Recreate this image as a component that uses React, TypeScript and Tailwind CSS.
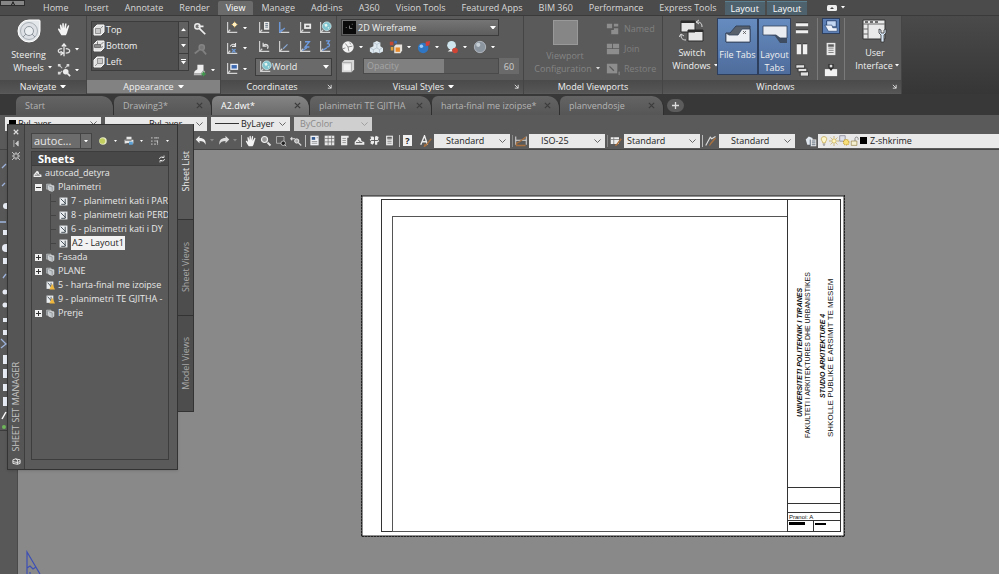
import { useState, type ReactNode } from 'react'
import { clsx } from 'clsx'

const MENU = [
    'Home', 'Insert', 'Annotate', 'Render', 'View', 'Manage', 'Add-ins', 'A360',
    'Vision Tools', 'Featured Apps', 'BIM 360', 'Performance', 'Express Tools',
]

const FILE_TABS = [
    { name: 'Start', width: 'w-[98px]', closable: false },
    { name: 'Drawing3*', width: 'w-[98px]', closable: true },
    { name: 'A2.dwt*', width: 'w-[98px]', closable: true },
    { name: 'planimetri TE GJITHA', width: 'w-[122px]', closable: true },
    { name: 'harta-final me izoipse*', width: 'w-[128px]', closable: true },
    { name: 'planvendosje', width: 'w-[104px]', closable: true },
]

const VIEWS = ['Top', 'Bottom', 'Left']

type SheetRow = { name: string; kind: 'root' | 'open' | 'closed' | 'sheet' | 'warn'; nested?: boolean }

const SHEETS: SheetRow[] = [
    { name: 'autocad_detyra', kind: 'root' },
    { name: 'Planimetri', kind: 'open' },
    { name: '7 - planimetri kati i PAR', kind: 'sheet', nested: true },
    { name: '8 - planimetri kati PERD', kind: 'sheet', nested: true },
    { name: '6 - planimetri kati i DY', kind: 'sheet', nested: true },
    { name: 'A2 - Layout1', kind: 'sheet', nested: true },
    { name: 'Fasada', kind: 'closed' },
    { name: 'PLANE', kind: 'closed' },
    { name: '5 - harta-final me izoipse', kind: 'warn' },
    { name: '9 - planimetri TE GJITHA -', kind: 'warn' },
    { name: 'Prerje', kind: 'closed' },
]

/* ---------- icons ---------- */

const axes = <path d="M3 1v12h11M3 13l3-3" fill="none" stroke="#d4d4d4" strokeWidth="1.3" />
const globe = (
    <>
        <circle cx="10" cy="6" r="5" fill="#7fc4cf" stroke="#d9f1f4" strokeWidth=".8" />
        <path d="M7 4l3-1 1 2-2 2zM11 7l2 0-1 2z" fill="#e6f5ef" />
    </>
)
const lens = <path d="M10 10l4 4" stroke="#e8e8e8" strokeWidth="2.4" />

const ICONS: Record<string, ReactNode> = {
    hand: (
        <path
            d="M5 15C3 12 1.500 9.500 1 8c.6-.9 1.800-.5 3 1.200L3.200 3.500c.2-1 1.500-1 1.700 0L6 7V2c.2-1.200 1.600-1.200 1.800 0L8 7l1.300-5c.4-1 1.700-.7 1.600.4L10.200 8l2.300-4c.6-.8 1.700-.2 1.400.7L12 10.500c-.5 2-1 3.500-2 4.500z"
            fill="#f4f4f4"
        />
    ),
    orbit: (
        <>
            <path d="M6 6.500C0 7 0 11 6 11.500M10 6.500c6 .5 6 4.500 0 5" fill="none" stroke="#e0e0e0" strokeWidth="1.500" />
            <path d="M8 1v14M5.500 4L8 1l2.500 3M4 9.500l3 2-3 2.500" fill="none" stroke="#eee" strokeWidth="1.400" />
        </>
    ),
    extents: (
        <>
            <path d="M3 3l3 3M3 12l3-3M12 3L9 6" fill="none" stroke="#c9c9c9" strokeWidth="1.200" />
            <path d="M1 1h3v3H1zM11 1h3v3h-3zM1 10h3v3H1z" fill="#d8d8d8" />
            <circle cx="10" cy="10" r="3.200" fill="#ececec" />
            <path d="M12 12l3 3" stroke="#eee" strokeWidth="2" />
        </>
    ),
    zoomOn: (
        <>
            <circle cx="5" cy="5" r="3" fill="#777" stroke="#eee" strokeWidth="1.600" />
            <path d="M7.500 7.500L14 14M6 5h6" stroke="#eee" strokeWidth="2" />
        </>
    ),
    zoomOff: (
        <>
            <circle cx="10" cy="5" r="3" fill="#777" stroke="#858585" strokeWidth="1.600" />
            <path d="M7.500 7.500L2 12M10 7l5 6" stroke="#808080" strokeWidth="2" />
        </>
    ),
    camera: (
        <>
            <path d="M2 9l3-2V2h7v6l-3 4H1z" fill="#eee" />
            <path d="M1 12h8l3-4 2 2-4 4H1z" fill="#b8b8b8" />
            <path d="M12 10v5M9.500 12.500h5" stroke="#3f9a4c" strokeWidth="1.600" />
        </>
    ),
    ucsStar: <>{axes}<path d="M11 0l1 3 3 1-3 1-1 3-1-3-3-1 3-1z" fill="#f3b84b" /><circle cx="11" cy="4" r="2.300" fill="#fff1c4" /></>,
    ucsRotate: <>{axes}<path d="M6 5c2-3 4-3 6-1M12 1v4H8" fill="none" stroke="#e6e6e6" strokeWidth="1.300" /><path d="M8 8l4 4M12 8l-4 4" stroke="#6e9bd8" strokeWidth="1.400" /></>,
    ucsView: <>{axes}<path d="M6 2h9v7H6z" fill="#e9eef7" /><path d="M7.500 3.500h6v4h-6z" fill="#3c69b0" /></>,
    ucsDoc: <>{axes}<path d="M8 1h6v9H8z" fill="#e8e8e8" /><path d="M9.500 3h3M9.500 5h3M9.500 7h3" stroke="#567" /></>,
    ucsOrigin: <>{axes}<path d="M3 1v12M3 13l6-5" stroke="#6b96d6" strokeWidth="1.500" /></>,
    ucsFace: <>{axes}<path d="M7 3h8v6H7z" fill="#eee" /><path d="M9 5h4v2H9z" fill="#666" /></>,
    ucsWorld: <>{axes}{globe}</>,
    ucsPrev: <>{axes}<path d="M7 3v4h4M7 7c3-4 7-1 5 3" fill="none" stroke="#e2e2e2" strokeWidth="1.300" /></>,
    ucsObj: <>{axes}<path d="M7 10l5-5" stroke="#8aa9d6" strokeWidth="1.300" /></>,
    ucsZ: <>{axes}<path d="M8 2h5L8 8h5M5 12l5-3" fill="none" stroke="#6f9be0" strokeWidth="1.500" /></>,
    ucs3: <>{axes}<path d="M9 1h4l-2 3c3 0 3 4-1 4M5 12l5-3" fill="none" stroke="#6f9be0" strokeWidth="1.500" /></>,
    shutter: (
        <>
            <circle cx="8" cy="8" r="6.500" fill="#f2f2f2" />
            <path d="M8 8L5 4M8 8l5-1M8 8l1 5M5 9l-3 1M10 3l1 2" stroke="#666" strokeWidth=".8" />
        </>
    ),
    cubes: (
        <>
            <path d="M5 3l4-2 4 2v4l3 2v4l-4 2-4-1-4 1-3-2V9l4-2z" fill="#dfe9f0" />
            <path d="M5 3l4 2 4-2M9 5v4M1 9l4 2 4-2 3 2 3-2M5 11v4M12 11v4" fill="none" stroke="#a3b4c0" strokeWidth=".7" />
        </>
    ),
    swatches: (
        <>
            <path d="M1 2h4v4H1z" fill="#c54a36" /><path d="M6 1h3v3H6z" fill="#3c6db8" />
            <path d="M2 8h3v4H2z" fill="#e0a13a" />
            <path d="M6 7l2-2h7v7l-2 3H6z" fill="#e7e2db" /><path d="M7.500 8.500h5v5h-5z" fill="#e88a2a" />
        </>
    ),
    blueBall: <><circle cx="7" cy="9" r="6" fill="#2f76c4" /><circle cx="5" cy="7" r="2" fill="#9cccf5" /><path d="M10 2l5-1-1 5-4 1z" fill="#d2403b" /></>,
    redBall: <><circle cx="7.500" cy="6" r="5" fill="#cfe6ee" /><path d="M3 13h6l-2-3" fill="#eee" /><circle cx="11.500" cy="12" r="3.200" fill="#cf4434" /></>,
    greyBall: <><circle cx="8" cy="8" r="6.500" fill="#8b95a0" stroke="#c5ccd2" strokeWidth=".8" /><circle cx="6" cy="5.500" r="2.400" fill="#c8d0d7" /></>,
    opacityCube: <><path d="M1 4l3-3h11v11l-3 3H1z" fill="#d7d7d7" /><path d="M3 6h8v7H3z" fill="#f3f3f3" /><path d="M12 4v11M1 4h11" stroke="#999" strokeWidth=".7" /></>,
    vpNamed: <path d="M1 2h6v5H1zM9 2h5v3H9zM9 7h5v7H6V9h3z" fill="#8d8d8d" />,
    vpJoin: <path d="M1 2h6v5H1zM8 2h7v5H8zM1 8h14v6H1z" fill="#8d8d8d" />,
    vpRestore: <><path d="M1 2h12v11H1z" fill="#8d8d8d" /><path d="M4 5l5 5M14 10v5" stroke="#5a5a5a" strokeWidth="1.500" /><path d="M15 11v4" stroke="#999" /></>,
    tileH: <><path d="M1 2h14v4H1zM1 10h14v4H1z" fill="#f0f0f0" /><path d="M1 2h14M1 10h14" stroke="#222" /></>,
    tileV: <><path d="M2 2h5v12H2zM9 2h5v12H9z" fill="#f0f0f0" /><path d="M2 2h5M9 2h5" stroke="#222" /></>,
    cascade: <path d="M1 2h10v4H1zM3.500 6h10v4h-10zM6 10h9.500v5H6z" fill="#e3e3e3" stroke="#333" />,
    statusBar: <><path d="M3 2h11v7H3z" fill="#c4d7f2" stroke="#203a68" /><path d="M1 7h8l1 3h5v4H5z" fill="#eef3fb" stroke="#203a68" strokeWidth=".7" /></>,
    calc: <><path d="M3 1h10v14H3z" fill="#e8e8e8" /><path d="M5 3h6v2H5zM5 7h6M5 9.500h6M5 12h6" fill="#555" stroke="#777" /></>,
    clip: <><path d="M1 7h14v8H1z" fill="#f3f3f3" /><path d="M5 1h6v4l-3 4-3-4z" fill="#2d2d2d" /><path d="M6.500 2h3v3h-3z" fill="#ddd" /></>,
    bulbYellow: <><circle cx="8" cy="8" r="6" fill="#e6e9c4" /><circle cx="7" cy="8" r="4.500" fill="#c2cf5e" /></>,
    printer: <><path d="M4 1h8v4H4zM1 6h14v6H1z" fill="#e6e6e6" /><path d="M8 9h6v5H8z" fill="#5ba1d6" /><path d="M2 7h10M4 12h4" stroke="#444" /></>,
    numbering: <path d="M3 2v3M3 7v3M3 12v3M7 3h7M7 8h4M12 7v7M7 13h3" stroke="#dcdcdc" strokeWidth="1.700" strokeDasharray="2 1" fill="none" />,
    refresh: <path d="M3 8c0-4 5-5 8-3M13 8c0 4-5 5-8 3M12 1v4H8M4 15v-4h4" fill="none" stroke="#f0f0f0" strokeWidth="1.700" />,
    undo: <path d="M1 6l5-5v3c6 0 9 3 8 9-1-4-4-5-8-5v3z" fill="#eee" />,
    redo: <path d="M15 6l-5-5v3C4 4 1 7 2 13c1-4 4-5 8-5v3z" fill="#dcdcdc" />,
    zoomLens: <><circle cx="6" cy="6" r="4" fill="#999" stroke="#eee" strokeWidth="1.600" />{lens}</>,
    zoomWindow: <><path d="M2 2h10v9H2z" fill="none" stroke="#c4c4c4" /><circle cx="11" cy="11" r="3" fill="#222" stroke="#ddd" /><path d="M13 13l2 2" stroke="#eee" /></>,
    zoomPrev: <><circle cx="9" cy="8" r="2.800" fill="#aaa" stroke="#eee" strokeWidth="1.300" /><path d="M1 5h6M3 3L1 5l2 2M11 10l4 4" stroke="#ddd" strokeWidth="1.500" /></>,
    propsDoc: <><path d="M2 1h12v14H2z" fill="#eef0f4" /><path d="M4 3h5v4H4z" fill="#31588f" /><path d="M11 4h2M4 9.500h8M4 12h8" stroke="#777" /></>,
    gridDoc: <><path d="M1 1h14v14H1z" fill="#e6e6e6" /><path d="M1 5h14M1 10h14M6 1v14M11 1v14" stroke="#666" /></>,
    toolDoc: <><path d="M3 1h11v3h-2v11H3z" fill="#e9e9e9" /><path d="M5 5h5M5 8h5M5 11h5" stroke="#777" /></>,
    sheets: <><path d="M1 10l6-7 3 2 1 4 4 1v4H1z" fill="#eee" /><path d="M3 11h9M6 7l4 4" stroke="#555" strokeWidth="1.300" /></>,
    markup: <><path d="M2 2h4l2 2 2-3 4 2-1 4 2 2-3 2v3H9l-1-3-3 3-3-2 1-3-2-2 2-2z" fill="#ebebeb" /><path d="M3 8h10M8 3v10" stroke="#555" strokeWidth="1.300" /></>,
    textStyle: <><path d="M1 13L6 1l4 12M3 9h6" fill="none" stroke="#eee" strokeWidth="1.800" /><path d="M15 5L8 14l-2 1 1-3" fill="none" stroke="#a9703f" strokeWidth="1.700" /></>,
    dimStyle: <><path d="M1 2v11M15 2v11M1 7h14" stroke="#ddd" strokeWidth="1.300" /><path d="M14 3L6 9l-4 2v3h12" fill="none" stroke="#a9703f" strokeWidth="1.800" /></>,
    tableStyle: <><path d="M1 3h11v9H1z" fill="#eee" /><path d="M1 6h11M5 3v9" stroke="#777" /><path d="M15 5l-6 8-2 1" fill="none" stroke="#a9703f" strokeWidth="2" /></>,
    leaderStyle: <><path d="M1 14L7 3l2 2 5-3" fill="none" stroke="#ddd" strokeWidth="1.500" /><path d="M14 4L8 11l-2 3" fill="none" stroke="#a9703f" strokeWidth="1.800" /></>,
    layers: <><path d="M1 6l4-4 5 2v9H3z" fill="#dfe6ee" /><path d="M7 6h8v9H7z" fill="#f2f2f2" /><path d="M7 6v9M9 8h5M9 10.500h5M9 13h5" stroke="#345" /></>,
    bulb: <><path d="M8 1c5 0 5 5 3 7l-1 3H6L5 8C3 6 3 1 8 1z" fill="#fdf6c8" stroke="#b8962e" /><path d="M6 13h4M7 15h2" stroke="#555" /></>,
    sun: <><circle cx="8" cy="8" r="3.500" fill="#fff6c0" stroke="#b8962e" /><path d="M8 0v3M8 13v3M0 8h3M13 8h3M2.500 2.500l2 2M11.500 11.500l2 2M13.500 2.500l-2 2M4.500 11.500l-2 2" stroke="#b8962e" /></>,
    vpFreeze: <><path d="M1 1h8v8H1z" fill="#dfe1ea" stroke="#778" /><circle cx="10.500" cy="10.500" r="4" fill="#f7df7a" stroke="#c19a2b" strokeDasharray="1.500 1" strokeWidth="1.500" /></>,
    lock: <><path d="M2 8h9v7H2z" fill="#f3eed0" stroke="#8d7a3a" /><path d="M8 8V4c0-3 5-3 5 0v2" fill="none" stroke="#777" strokeWidth="1.300" /></>,
    sheetSet: <><path d="M1 2h8v9H1z" fill="#8e9498" stroke="#c9cdd0" /><path d="M4 5l3-1 7 1v8l-3 2-6-2z" fill="#c3cacf" stroke="#eee" /><path d="M5 5l6 2v8" fill="none" stroke="#777" /></>,
    sheet: <><path d="M1 1h14v14H1z" fill="#e9ecee" /><path d="M3 3l9 9M11 3v10H4" stroke="#3a444c" strokeWidth="1.600" fill="none" /></>,
    sheetWarn: <><path d="M1 1h12v13H1z" fill="#e9ecee" /><path d="M3 3l7 8M9 3v8" stroke="#3a444c" strokeWidth="1.500" fill="none" /><path d="M11 5l5 10H6z" fill="#eeb63c" /></>,
}

function Icon({ name, size = 'size-[14px]' }: { name: string; size?: string }) {
    return (
        <svg viewBox="0 0 16 16" className={clsx('shrink-0', size)} aria-hidden="true">
            {ICONS[name]}
        </svg>
    )
}

function Caret({ className = 'w-[5px] text-white' }: { className?: string }) {
    return (
        <svg viewBox="0 0 8 5" className={clsx('shrink-0', className)} aria-hidden="true">
            <path d="M0 0h8L4 5z" fill="currentColor" />
        </svg>
    )
}

/* ---------- small controls ---------- */

function Tool({ icon, drop = false, label }: { icon: string; drop?: boolean; label: string }) {
    return (
        <button type="button" aria-label={label} className="flex items-center gap-1">
            <Icon name={icon} />
            {drop && <Caret className="w-1 text-white" />}
        </button>
    )
}

function LightSelect({ label, options, width, inset = 'pl-3', muted = false, line = false }: {
    label: string
    options: string[]
    width: string
    inset?: string
    muted?: boolean
    line?: boolean
}) {
    return (
        <label className={clsx('relative flex h-[14px] shrink-0 items-center', width, muted ? 'bg-[#cfcfcf] text-[#8a8a8a]' : 'bg-[#e9e9e9] text-[#222]')}>
            {line && <span className="ml-1 h-px w-6 shrink-0 bg-[#333]" />}
            <select aria-label={label} disabled={muted} className={clsx('h-full w-full appearance-none leading-[14px] opacity-100 outline-none', inset)}>
                {options.map((o) => <option key={o}>{o}</option>)}
            </select>
            <svg viewBox="0 0 8 5" className="pointer-events-none absolute top-[5px] right-1 w-[7px]" aria-hidden="true">
                <path d="M.5 .5L4 4 7.500 .5" fill="none" stroke={muted ? '#999' : '#555'} />
            </svg>
        </label>
    )
}

function Panel({ title, width, drop, launcher, active, children }: {
    title: string
    width: string
    drop?: boolean
    launcher?: boolean
    active?: boolean
    children: ReactNode
}) {
    return (
        <section className={clsx('flex shrink-0 flex-col border-r border-[#454545] bg-[#5a5a5a]', width)}>
            <div className="flex h-16 px-1 pt-[2px]">{children}</div>
            <h2 className={clsx(
                'flex h-[13px] items-center justify-center gap-1 leading-[13px]',
                active ? 'bg-[#828282]' : 'bg-linear-to-b from-[#4a4a4a] to-[#565656]'
            )}>
                <span className={clsx(launcher && 'ml-auto')}>{title}</span>
                {drop && <Caret className="w-[6px] text-white" />}
                {launcher && (
                    <svg viewBox="0 0 6 6" className="mr-1 ml-auto w-[5px]" aria-hidden="true">
                        <path d="M1 1l4 4M5 1v4H1" fill="none" stroke="#eee" />
                    </svg>
                )}
            </h2>
        </section>
    )
}

/* ---------- top of the window ---------- */

function MenuBar() {
    return (
        <header className="flex h-[15px] items-end bg-[#4b4b4b] text-[#d8d8d8]">
            <button type="button" aria-label="Application menu" className="mr-[10px] h-[6px] w-[25px] shrink-0 self-start border border-[#2c2c2c] bg-[#868686]">
                <svg viewBox="0 0 23 4" className="block h-1 w-[23px]" aria-hidden="true"><path d="M12 0l-2 4h1l1-2 1 2h1z" fill="#111" /></svg>
            </button>
            <nav className="flex shrink-0 items-end">
                {MENU.map((item) => (
                    <a
                        key={item}
                        href="#"
                        className={clsx('h-[14px] px-2 leading-[13px] whitespace-nowrap', item === 'View' && 'rounded-t-xs bg-[#6b6b6b] text-white')}
                    >
                        {item}
                    </a>
                ))}
                {['a', 'b'].map((id) => (
                    <a key={id} href="#" className="mr-[2px] h-[14px] border-t border-[#5b7f8e] bg-[#4e626e] px-[6px] leading-[13px] text-white">
                        Layout
                    </a>
                ))}
            </nav>
            <button type="button" aria-label="Minimize ribbon" className="ml-[18px] flex items-center gap-1 self-center">
                <svg viewBox="0 0 10 6" className="w-[10px]"><rect width="10" height="6" rx="1.500" fill="#eee" /><path d="M3 4l2-2 2 2z" fill="#444" /></svg>
                <Caret className="w-1 text-white" />
            </button>
        </header>
    )
}

function ViewCube({ kind }: { kind: string }) {
    return (
        <svg viewBox="0 0 12 12" className="size-3 shrink-0" aria-hidden="true">
            <path d="M1 4l3-3h7v7l-3 3H1z" fill="#e2e2e2" stroke="#f8f8f8" />
            {kind === 'Top' && <path d="M2.500 4.500h5v5h-5zM8 4l2-2" fill="#c9c9c9" stroke="#777" strokeWidth=".7" />}
            {kind === 'Bottom' && <path d="M1.500 4.500h6v3h-6zM4.500 1.500v3M8 4.500l2.500-2.500M8 7.500l2-1" fill="#8a8a8a" stroke="#555" strokeWidth=".7" />}
            {kind === 'Left' && <path d="M4.500 2.500h5v5h-5zM4.500 7.500L2 10" fill="#c9c9c9" stroke="#777" strokeWidth=".7" />}
        </svg>
    )
}

function Ribbon() {
    const [style, setStyle] = useState('2D Wireframe')
    return (
        <div className="flex h-[79px] overflow-hidden border-t border-[#3a3a3a] bg-linear-to-b from-[#4a4a4a] to-[#363636] text-[#f0f0f0]">
            <Panel title="Navigate" width="w-[87px]" drop>
                <button type="button" className="flex w-[49px] flex-col items-center leading-[13px]">
                    <svg viewBox="0 0 24 26" className="mt-px mb-[3px] h-[26px] w-6 shrink-0" aria-hidden="true">
                        <path d="M12 1h10q1 0 1 1v10a11 11 0 1 1-11-11z" fill="#e4e7ea" stroke="#fff" />
                        <circle cx="12" cy="12" r="8.500" fill="#dde1e5" stroke="#9aa2a9" strokeWidth=".8" />
                        <circle cx="12" cy="12" r="4.500" fill="#eceff1" stroke="#8f979e" />
                        <path d="M6 18l3-3M18 18l-3-3" stroke="#8f979e" />
                    </svg>
                    <span>Steering</span>
                    <span className="flex items-center gap-1 pl-2">Wheels<Caret className="w-1 text-white" /></span>
                </button>
                <div className="flex flex-col justify-between pt-1 pb-[3px] pl-1">
                    <Tool icon="hand" label="Pan" />
                    <Tool icon="orbit" label="Orbit" drop />
                    <Tool icon="extents" label="Extents" drop />
                </div>
            </Panel>

            <Panel title="Appearance" width="w-[134px]" drop active>
                <div className="mt-[3px] flex h-[50px] w-[98px] border border-[#3c3c3c] bg-[#505050]">
                    <ul className="flex-1 pl-px">
                        {VIEWS.map((v) => (
                            <li key={v}>
                                <button type="button" className="flex h-4 items-center gap-px">
                                    <ViewCube kind={v} />
                                    {v}
                                </button>
                            </li>
                        ))}
                    </ul>
                    <div className="flex w-[10px] flex-col border-l border-[#3c3c3c]">
                        <button type="button" aria-label="Scroll up" className="flex h-4 items-center justify-center border-b border-[#3c3c3c] bg-[#616161]"><Caret className="w-[5px] rotate-180 text-white" /></button>
                        <button type="button" aria-label="Scroll down" className="flex h-4 items-center justify-center border-b border-[#3c3c3c] bg-[#616161]"><Caret className="w-[5px] text-white" /></button>
                        <button type="button" aria-label="More views" className="flex h-4 flex-col items-center justify-center gap-px bg-[#616161]"><span className="h-px w-[5px] bg-white" /><Caret className="w-[5px] text-white" /></button>
                    </div>
                </div>
                <div className="flex flex-col justify-between pt-1 pb-[3px] pl-1">
                    <Tool icon="zoomOn" label="View manager" />
                    <Tool icon="zoomOff" label="Previous view" />
                    <Tool icon="camera" label="Camera" drop />
                </div>
            </Panel>

            <Panel title="Coordinates" width="w-[116px]" launcher>
                <div className="flex flex-col justify-between pt-[3px] pb-1">
                    <Tool icon="ucsStar" label="UCS" drop />
                    <Tool icon="ucsRotate" label="Rotate UCS" drop />
                    <Tool icon="ucsView" label="UCS view" drop />
                </div>
                <div className="ml-2 flex flex-1 flex-col justify-between pt-[3px]">
                    <div className="flex justify-between pl-[2px]">
                        <Tool icon="ucsDoc" label="Named UCS" />
                        <Tool icon="ucsOrigin" label="Origin" />
                        <Tool icon="ucsFace" label="Face" />
                        <Tool icon="ucsWorld" label="World UCS" />
                    </div>
                    <div className="flex justify-between pl-[2px]">
                        <Tool icon="ucsPrev" label="Previous UCS" />
                        <Tool icon="ucsObj" label="Object" />
                        <Tool icon="ucsZ" label="Z axis" />
                        <Tool icon="ucs3" label="3-point" />
                    </div>
                    <label className="relative mb-1 flex h-[18px] items-center border border-[#3c3c3c] bg-[#6a6a6a] pl-[2px]">
                        <Icon name="ucsWorld" />
                        <select aria-label="Coordinate system" className="w-full appearance-none leading-4 outline-none">
                            <option>World</option>
                        </select>
                        <Caret className="pointer-events-none absolute right-[2px] w-[6px] text-white" />
                    </label>
                </div>
            </Panel>

            <Panel title="Visual Styles" width="w-[187px]" drop launcher>
                <div className="flex flex-1 flex-col gap-1 pt-px">
                    <label className="relative flex h-[17px] w-[158px] items-center border border-[#3c3c3c] bg-linear-to-b from-[#757575] to-[#5e5e5e]">
                        <svg viewBox="0 0 14 14" className="ml-px w-[13px] shrink-0" aria-hidden="true"><rect width="14" height="14" fill="#0a0a0a" /><path d="M3 7h1M7 5v3h3M10 3v1" stroke="#bbb" strokeWidth=".7" fill="none" /></svg>
                        <select aria-label="Visual style" value={style} onChange={(e) => setStyle(e.target.value)} className="w-full appearance-none pl-[2px] leading-[15px] outline-none">
                            <option>2D Wireframe</option>
                            <option>Conceptual</option>
                            <option>Realistic</option>
                        </select>
                        <Caret className="pointer-events-none absolute right-[2px] w-[6px] text-white" />
                    </label>
                    <div className="flex items-center justify-between pr-6">
                        <Tool icon="shutter" label="Shade" drop />
                        <Tool icon="cubes" label="X-ray" />
                        <Tool icon="swatches" label="Materials" drop />
                        <Tool icon="blueBall" label="Face colors" drop />
                        <Tool icon="redBall" label="Shadows" drop />
                        <Tool icon="greyBall" label="Backgrounds" drop />
                    </div>
                    <div className="flex items-center">
                        <Icon name="opacityCube" />
                        <label className="relative ml-2 flex h-4 flex-1 items-center border border-[#4a4a4a] text-[#a5a5a5]">
                            <span className="h-full w-3/5 bg-[#808080] pl-[3px] leading-[14px]">Opacity</span>
                            <input type="range" defaultValue={60} className="absolute inset-0 size-full opacity-0" />
                        </label>
                        <input aria-label="Opacity value" defaultValue="60" className="h-4 w-5 bg-[#6a6a6a] text-center text-[#cfcfcf] outline-none" />
                    </div>
                </div>
            </Panel>

            <Panel title="Model Viewports" width="w-[139px]">
                <button type="button" disabled className="flex w-[74px] shrink-0 flex-col items-center pt-[2px] leading-[13px] text-[#858585]">
                    <span className="mb-1 size-[25px] shrink-0 border border-[#999] bg-[#868686]" />
                    <span>Viewport</span>
                    <span className="flex items-center gap-1 pl-1">Configuration<Caret className="w-1 text-[#ddd]" /></span>
                </button>
                <ul className="flex flex-col justify-between pt-[3px] pb-[3px] pl-1 text-[#808080]">
                    {[['vpNamed', 'Named'], ['vpJoin', 'Join'], ['vpRestore', 'Restore']].map(([icon, label]) => (
                        <li key={label}>
                            <button type="button" disabled className="flex items-center gap-1 leading-4"><Icon name={icon} />{label}</button>
                        </li>
                    ))}
                </ul>
            </Panel>

            <Panel title="Windows" width="w-[239px]" launcher>
                <button type="button" className="flex w-[50px] shrink-0 flex-col items-center pt-px leading-[13px]">
                    <svg viewBox="0 0 26 24" className="mb-[3px] h-6 w-[26px] shrink-0" aria-hidden="true">
                        <path d="M2 2h14v11H2zM9 11h15v11H9z" fill="#e6e6e6" stroke="#2b2b2b" />
                        <path d="M2 2h14v2H2zM9 11h15v2H9z" fill="#2b2b2b" />
                        <path d="M18 3c4 0 5 2 5 5M20 1l-3 2 3 2M7 21c-4 0-5-2-5-5M0 18l2-3 3 2" fill="none" stroke="#ddd" />
                    </svg>
                    <span>Switch</span>
                    <span className="flex items-center gap-[3px] pl-[6px]">Windows<Caret className="w-1 text-white" /></span>
                </button>
                <button type="button" aria-pressed="true" className="flex h-[57px] w-[41px] shrink-0 flex-col items-center border border-[#2d3f5c] bg-linear-to-b from-[#668cbf] to-[#4e6c9c] pt-[5px] leading-[13px]">
                    <svg viewBox="0 0 26 20" className="mb-1 h-5 w-[26px] shrink-0" aria-hidden="true">
                        <path d="M1 18V9h4l6-7h14v16z" fill="#58606b" stroke="#34435a" />
                        <path d="M1 18V9l3 2h9l4-6h8v13z" fill="#eceff3" stroke="#34435a" strokeWidth=".8" />
                        <path d="M18 7l3 3M21 7l-3 3" stroke="#555" strokeWidth=".8" />
                    </svg>
                    <span className="whitespace-nowrap">File Tabs</span>
                </button>
                <button type="button" aria-pressed="true" className="flex h-[57px] w-[33px] shrink-0 flex-col items-center border border-[#2d3f5c] bg-linear-to-b from-[#668cbf] to-[#4e6c9c] pt-[5px] leading-[13px]">
                    <svg viewBox="0 0 26 20" className="mb-1 h-5 w-[26px] shrink-0" aria-hidden="true">
                        <path d="M6 12h7l5 7h7v-9z" fill="#3f4d62" />
                        <path d="M1 2h24v12h-7l-4-3H1z" fill="#e9edf2" stroke="#34435a" strokeWidth=".8" />
                    </svg>
                    <span>Layout</span>
                    <span>Tabs</span>
                </button>
                <div className="ml-1 flex flex-col justify-between border-r border-[#7a7a7a] pt-[3px] pr-2 pb-[3px]">
                    <Tool icon="tileH" label="Tile horizontally" />
                    <Tool icon="tileV" label="Tile vertically" />
                    <Tool icon="cascade" label="Cascade" />
                </div>
                <div className="flex flex-col items-center justify-between border-r border-[#7a7a7a] pr-1 pb-[3px] pl-1">
                    <button type="button" aria-label="Toolbars" aria-pressed="true" className="border border-[#2d3f5c] bg-[#5c80b5] px-px"><Icon name="statusBar" /></button>
                    <Tool icon="calc" label="Calculator" />
                    <Tool icon="clip" label="Clipboard" />
                </div>
                <button type="button" className="ml-2 flex w-11 shrink-0 flex-col items-center pt-px leading-[13px]">
                    <svg viewBox="0 0 26 24" className="mb-[3px] h-6 w-[26px] shrink-0" aria-hidden="true">
                        <path d="M1 1h22v19H1z" fill="#e9e9e9" stroke="#333" />
                        <path d="M1 5h22M6 5v15M1 10h5M1 15h5" stroke="#666" />
                        <path d="M3 3h3M8 3h3M13 3h3" stroke="#444" strokeWidth="1.500" />
                        <path d="M17 10v4l2 2v7h3v-7l2-2v-4l-2 1v3h-3v-3z" fill="#d7e6f5" stroke="#333" strokeWidth=".8" />
                    </svg>
                    <span>User</span>
                    <span className="flex items-center gap-[2px] pl-1">Interface<Caret className="w-1 text-white" /></span>
                </button>
            </Panel>
        </div>
    )
}

function FileTabs() {
    const [active, setActive] = useState('A2.dwt*')
    return (
        <div className="flex h-[21px] items-end bg-[#383838] pl-4">
            {FILE_TABS.map((tab) => (
                <div
                    key={tab.name}
                    className={clsx(
                        'flex h-[19px] shrink-0 items-center justify-between rounded-tl-md rounded-tr-xl border-r border-[#2f2f2f] pr-2 pl-[9px] leading-[18px]',
                        tab.width,
                        tab.name === active ? 'bg-linear-to-b from-[#858585] to-[#6b6b6b] text-white' : 'bg-linear-to-b from-[#646464] to-[#565656] text-[#b4b4b4]'
                    )}
                >
                    <button type="button" onClick={() => setActive(tab.name)} className="whitespace-nowrap">{tab.name}</button>
                    {tab.closable && (
                        <button type="button" aria-label={`Close ${tab.name}`}>
                            <svg viewBox="0 0 8 8" className="w-[7px]"><path d="M1 1l6 6M7 1L1 7" stroke="#3c3c3c" strokeWidth="1.500" /></svg>
                        </button>
                    )}
                </div>
            ))}
            <button type="button" aria-label="New drawing" className="mb-[3px] ml-[3px] flex h-[13px] w-[17px] items-center justify-center rounded-lg bg-[#5c5c5c]">
                <svg viewBox="0 0 8 8" className="w-[7px]"><path d="M4 0v8M0 4h8" stroke="#ddd" strokeWidth="1.500" /></svg>
            </button>
        </div>
    )
}

function Toolbars() {
    const divider = <span className="h-3 w-px bg-[#bdbdbd]" />
    return (
        <div className="bg-[#5a5a5a]">
            <div className="flex h-[17px] items-center gap-1 pl-[5px]">
                <label className="relative flex h-[14px] w-24 items-center bg-[#e9e9e9] pl-1 text-[#222]">
                    <span className="size-[7px] shrink-0 bg-black" />
                    <select aria-label="Color" className="h-full w-full appearance-none pl-[2px] leading-[14px] outline-none"><option>ByLayer</option></select>
                    <svg viewBox="0 0 8 5" className="absolute right-1 w-[7px]" aria-hidden="true"><path d="M.5 .5L4 4 7.500 .5" fill="none" stroke="#555" /></svg>
                </label>
                <LightSelect label="Linetype" options={['ByLayer']} width="w-[102px]" inset="pl-11" />
                <LightSelect label="Lineweight" options={['ByLayer']} width="w-[79px]" inset="pl-[2px]" line />
                <LightSelect label="Plot style" options={['ByColor']} width="w-[78px]" inset="pl-[6px]" muted />
            </div>
            <div className="flex h-[18px] items-center border-b border-[#444] pl-[195px]">
                <div className="flex items-center gap-[3px]">
                    <button type="button" aria-label="Undo"><Icon name="undo" size="size-3" /></button>
                    <Caret className="mr-px w-1 text-[#888]" />
                    <button type="button" aria-label="Redo"><Icon name="redo" size="size-3" /></button>
                    <Caret className="mr-px w-1 text-[#888]" />
                    {divider}
                    {['hand', 'zoomLens', 'zoomWindow', 'zoomPrev'].map((n) => (
                        <button key={n} type="button" aria-label={n}><Icon name={n} size="size-3" /></button>
                    ))}
                    {divider}
                    {['propsDoc', 'gridDoc', 'toolDoc', 'sheets', 'markup', 'calc'].map((n) => (
                        <button key={n} type="button" aria-label={n} className="mr-px"><Icon name={n} size="size-[11px]" /></button>
                    ))}
                    {divider}
                    <button type="button" className="h-[11px] w-[9px] bg-[#f0f0f0] text-center leading-[11px] font-bold text-[#222]">?</button>
                </div>
                <div className="ml-2 flex items-center gap-[2px]">
                    <Icon name="textStyle" size="size-3" />
                    <LightSelect label="Text style" options={['Standard']} width="w-[76px]" />
                    <span className="h-3 w-px bg-[#888]" />
                    <Icon name="dimStyle" size="size-3" />
                    <LightSelect label="Dimension style" options={['ISO-25']} width="w-[76px]" />
                    <span className="h-3 w-px bg-[#888]" />
                    <Icon name="tableStyle" size="size-3" />
                    <LightSelect label="Table style" options={['Standard']} width="w-[76px]" inset="pl-[3px]" />
                    <span className="h-3 w-px bg-[#bbb]" />
                    <Icon name="leaderStyle" size="size-3" />
                    <LightSelect label="Multileader style" options={['Standard']} width="w-[76px]" />
                </div>
                <div className="ml-[10px] flex flex-1 items-center gap-px">
                    <Icon name="layers" size="size-3" />
                    <label className="flex h-[14px] flex-1 items-center bg-[#e9e9e9] pl-px text-[#222]">
                        <Icon name="bulb" size="size-[10px]" />
                        <Icon name="sun" size="size-[10px]" />
                        <Icon name="vpFreeze" size="size-[11px]" />
                        <Icon name="lock" size="size-[10px]" />
                        <span className="size-[7px] shrink-0 bg-black" />
                        <select aria-label="Layer" className="w-full appearance-none pl-[3px] leading-[14px] outline-none"><option>Z-shkrime</option></select>
                    </label>
                </div>
            </div>
        </div>
    )
}

/* ---------- sheet set palette ---------- */

function TreeRow({ row, selected, onSelect }: { row: SheetRow; selected: boolean; onSelect: () => void }) {
    const group = row.kind === 'open' || row.kind === 'closed'
    return (
        <li className={clsx('flex h-[14px] items-center gap-[3px]', row.kind === 'root' ? 'pl-px' : row.nested ? 'pl-[18px]' : group ? 'pl-[3px]' : 'pl-[14px]')}>
            {row.nested && (
                <svg viewBox="0 0 6 14" className="h-[14px] w-[6px] shrink-0" aria-hidden="true">
                    <path d="M.5 0v14M.5 7.500H6" stroke="#444" />
                </svg>
            )}
            {group && (
                <svg viewBox="0 0 7 7" className="mr-px w-[7px] shrink-0" aria-hidden="true">
                    <rect width="7" height="7" fill="#f0f0f0" />
                    <path d={row.kind === 'open' ? 'M1 3.500h5' : 'M1 3.500h5M3.500 1v5'} stroke="#333" />
                </svg>
            )}
            <Icon
                name={row.kind === 'root' ? 'sheets' : group ? 'sheetSet' : row.kind === 'warn' ? 'sheetWarn' : 'sheet'}
                size="size-[9px]"
            />
            <button type="button" onClick={onSelect} className={clsx('leading-[14px] whitespace-nowrap', selected && 'bg-[#f2f2f2] px-px text-[#222]')}>
                {row.name}
            </button>
        </li>
    )
}

function SheetSetManager() {
    const [selected, setSelected] = useState('A2 - Layout1')
    return (
        <aside className="absolute top-[124px] left-[7px] flex items-start text-[#e8e8e8]">
            <div className="flex h-[346px] w-[171px] border border-[#333] bg-[#5a5a5a] shadow">
                <div className="flex w-[17px] flex-col items-center border-r border-[#3d3d3d] bg-[#555] pt-1 pb-[2px]">
                    <button type="button" aria-label="Close palette"><svg viewBox="0 0 8 8" className="w-[6px]"><path d="M1 1l6 6M7 1L1 7" stroke="#ddd" strokeWidth="1.500" /></svg></button>
                    <button type="button" aria-label="Auto-hide" className="mt-[5px]"><svg viewBox="0 0 8 8" className="w-[7px]"><path d="M1 0v8M3 4h3M6 1v6L3 4z" stroke="#ccc" fill="#ccc" strokeWidth=".8" /></svg></button>
                    <button type="button" aria-label="Palette properties" className="mt-[5px]"><svg viewBox="0 0 8 8" className="w-2"><path d="M0 0l2 2M8 0L6 2M0 8l2-2M8 8L6 6M2 2h4v4H2zM0 4h2M6 4h2M4 0v2M4 6v2" fill="none" stroke="#ccc" strokeWidth=".9" /></svg></button>
                    <h2 className="mt-auto mb-[6px] rotate-180 leading-[14px] whitespace-nowrap text-[#c4c4c4] [writing-mode:vertical-rl]">SHEET SET MANAGER</h2>
                    <svg viewBox="0 0 10 8" className="mb-[2px] w-[9px]" aria-hidden="true"><path d="M1 2l3-1 5 1v4L6 7 1 6zM1 4l5 1 3-1M4 1l2 1v5" fill="none" stroke="#eee" /></svg>
                </div>
                <div className="flex min-w-0 flex-1 flex-col pt-[7px] pr-2 pb-[9px] pl-[6px]">
                    <div className="flex h-[18px] items-center">
                        <label className="relative flex h-4 w-[61px] items-center border border-[#444] bg-[#6c6c6c]">
                            <select aria-label="Sheet set" className="w-full appearance-none pl-[2px] text-[11px] leading-[14px] outline-none"><option>autoc...</option></select>
                            <span className="absolute inset-y-0 right-0 flex w-[11px] items-center justify-center border-l border-[#444]"><Caret className="w-1 text-white" /></span>
                        </label>
                        <div className="flex flex-1 justify-between pl-[6px]">
                            {['bulbYellow', 'printer', 'numbering'].map((n) => (
                                <button key={n} type="button" aria-label={n} className="flex items-center gap-[6px]">
                                    <Icon name={n} size="size-[10px]" />
                                    <Caret className="w-[3px] text-white" />
                                </button>
                            ))}
                        </div>
                    </div>
                    <div className="mt-px flex-1 overflow-hidden border border-[#3d3d3d]">
                        <div className="flex h-[14px] items-center justify-between border-b border-[#3d3d3d] bg-[#484848] pr-[2px] pl-[6px]">
                            <h3 className="text-[11px] leading-[14px] font-bold text-white">Sheets</h3>
                            <button type="button" aria-label="Refresh"><Icon name="refresh" size="size-2" /></button>
                        </div>
                        <ul>
                            {SHEETS.map((row) => (
                                <TreeRow key={row.name} row={row} selected={row.name === selected} onSelect={() => setSelected(row.name)} />
                            ))}
                        </ul>
                    </div>
                </div>
            </div>
            <div className="flex flex-col">
                {['Sheet List', 'Sheet Views', 'Model Views'].map((tab, i) => (
                    <button
                        key={tab}
                        type="button"
                        className={clsx(
                            'flex h-24 w-4 items-center justify-center border-r border-b border-[#333]',
                            i === 0 ? 'bg-[#5a5a5a] text-[#e8e8e8]' : 'bg-[#4d4d4d] text-[#a8a8a8]'
                        )}
                    >
                        <span className="rotate-180 leading-[14px] whitespace-nowrap [writing-mode:vertical-rl]">{tab}</span>
                    </button>
                ))}
            </div>
        </aside>
    )
}

/* ---------- drawing area ---------- */

function DrawingSheet() {
    return (
        <svg viewBox="0 0 484 342" className="absolute top-[45px] left-[343px] w-[484px]" fontFamily="'Liberation Sans', Arial, sans-serif">
            <rect x="1" y="1" width="482" height="340" fill="#fff" stroke="#222" strokeWidth="1" />
            <path d="M.5 0v341.500h483V0" fill="none" stroke="#222" strokeDasharray="2 1" />
            <g fill="none" stroke="#333" shapeRendering="crispEdges">
                <rect x="20.500" y="4.500" width="459" height="332" />
                <rect x="31.500" y="21.500" width="395" height="315" stroke="#555" />
                <path d="M426.500 4.500v332M426.500 292.500h53M426.500 308.500h53M426.500 317.500h53M426.500 325.500h53M452.500 325.500v11" />
            </g>
            <g fill="#111" fontSize="7">
                <text transform="translate(441 222) rotate(-90)" fontWeight="700" fontStyle="italic">UNIVERSITETI POLITEKNIK I TIRANES</text>
                <text transform="translate(449 243) rotate(-90)">FAKULTETI I ARKITEKTURES DHE URBANISTIKES</text>
                <text transform="translate(464 203) rotate(-90)" fontWeight="700" fontStyle="italic">STUDIO ARKITEKTURE 4</text>
                <text transform="translate(472 242) rotate(-90)" fontSize="8">SHKOLLE PUBLIKE E ARSIMIT TE MESEM</text>
                <text x="428" y="324" fontSize="6">Pranoi: A</text>
            </g>
            <path d="M428 327h16v3h-16zM454 328h11v2h-11z" fill="#000" />
        </svg>
    )
}

function LeftTools() {
    return (
        <div className="flex w-[18px] shrink-0 flex-col border-r border-[#4a4a4a] bg-[#585858]">
            <svg viewBox="0 0 7 280" className="h-[280px] w-[7px]" aria-hidden="true">
                <path d="M2 18l4-4M2 36l3-3M0 72h6M3 128l3-4M1 198l5-4-5-5" fill="none" stroke="#9fb4dd" strokeWidth="1.300" />
                <g fill="#e8ecf5">
                    <circle cx="6" cy="56" r="3" /><path d="M3 80h4v5H3z" /><circle cx="6" cy="98" r="4" /><path d="M3 108h4v6H3z" />
                    <circle cx="5" cy="142" r="2.500" /><circle cx="5" cy="155" r="2.500" /><path d="M3 168h4v4H3zM3 180h4v5H3zM3 205h4v9H3zM3 219h4v9H3zM3 234h4v7H3zM3 247h4v9H3z" />
                </g>
                <path d="M2 269l4-7" stroke="#fff" strokeWidth="1.500" />
                <circle cx="4" cy="277" r="2" fill="#6fb75a" />
            </svg>
            <span className="h-px w-[7px] bg-[#3c3c3c]" />
        </div>
    )
}

export default function App() {
    return (
        <div className="relative flex min-h-screen w-full flex-col overflow-hidden bg-[#898989] font-['Open_Sans','Noto_Sans',sans-serif] text-[9px] leading-[14px]">
            <MenuBar />
            <Ribbon />
            <FileTabs />
            <Toolbars />
            <main className="flex flex-1">
                <LeftTools />
                <div className="relative min-h-[420px] flex-1 bg-[#898989]">
                    <DrawingSheet />
                    <svg viewBox="0 0 20 24" className="absolute bottom-0 left-2 w-5" aria-hidden="true">
                        <path d="M1 24V2l13 22M1 18l3-2 3 3 3-2M4 24v-2" fill="none" stroke="#3c4fb5" strokeWidth="1.200" />
                    </svg>
                </div>
            </main>
            <SheetSetManager />
        </div>
    )
}
